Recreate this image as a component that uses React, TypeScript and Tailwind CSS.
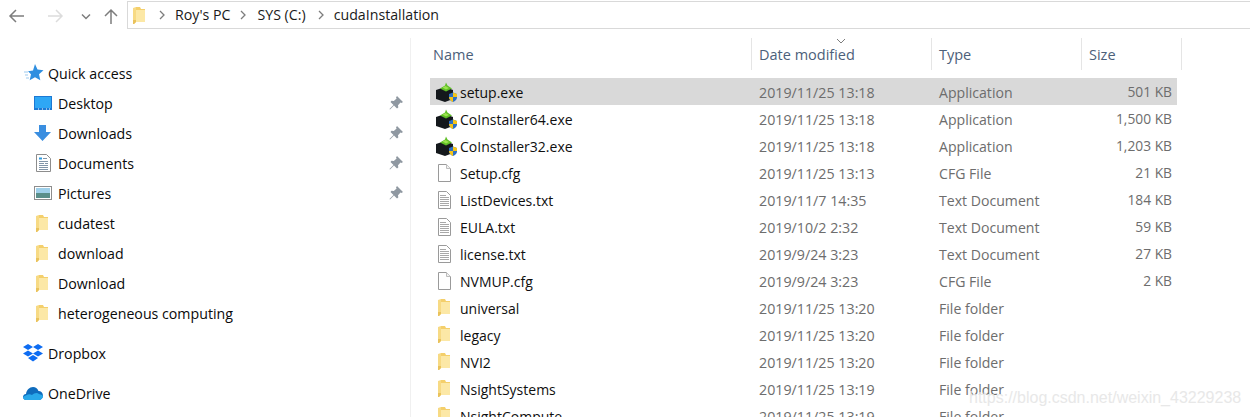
import React from "react";

const FONT = "font-['Open_Sans','Noto_Sans',sans-serif]";

function Folder({ className = "" }: { className?: string }) {
  return (
    <svg width="12" height="17" viewBox="0 0 12 17" className={className}>
      <path d="M3 0h4l1 2h4v13H3z" fill="#f4cf6b" />
      <path d="M3 3h9v12H3z" fill="#fce8a6" />
      <path d="M0 1l3-1v15l-2 2H0z" fill="#f7da84" />
      <path d="M0 13h3v2l-2 2H0z" fill="#e9c25c" />
    </svg>
  );
}

function Pin() {
  return (
    <svg width="14" height="14" viewBox="0 0 14 14">
      <path d="M8 0l6 6-1.500 1-1-.6L9 9.200l.3 2.300-1.300 1-3-3L1 13.500l-.5-.5 4-4-3-3 1-1.300 2.300.3L7.600 2.500 7 1.500z" fill="#8f98a1" />
    </svg>
  );
}

function ExeIcon() {
  return (
    <svg width="21" height="20" viewBox="0 0 21 20">
      <path d="M0 8l9-3 8 3v9l-8 3-9-3z" fill="#14181c" />
      <path d="M4 6.500l5-3 1-3 1.500 3 4.500 3-6 3z" fill="#5fbf26" />
      <path d="M6.500 5.500l3-1.500 3.500 2-3 1.500z" fill="#9be34f" />
      <path d="M13 12l4-1.500 4 1.500v3.500c0 2-2 3.500-4 4.500-2-1-4-2.500-4-4.500z" fill="#2d6fc4" />
      <path d="M17 10.500l4 1.500v3h-4zM13 15h4v5c-2-1-4-2.500-4-5z" fill="#f5c518" />
    </svg>
  );
}

function BlankFile() {
  return (
    <svg width="13" height="18" viewBox="0 0 13 18">
      <path d="M.5.500h8l4 4v13H.500z" fill="#fff" stroke="#9a9a9a" />
      <path d="M8.500.500v4h4" fill="#f2f2f2" stroke="#bdbdbd" />
    </svg>
  );
}

function TextFile() {
  return (
    <svg width="13" height="18" viewBox="0 0 13 18">
      <path d="M.5.500h8l4 4v13H.500z" fill="#fff" stroke="#9a9a9a" />
      <path d="M2 4.500h6M2 6.500h9M2 8.500h9M2 10.500h9M2 12.500h9M2 14.500h9" stroke="#a8a8a8" />
    </svg>
  );
}

function Chevron({ className }: { className: string }) {
  return (
    <svg width="8" height="10" viewBox="0 0 8 10" className={className}>
      <path d="M2 1l4 4-4 4" fill="none" stroke="#7d7d7d" strokeWidth="1.300" />
    </svg>
  );
}

function NavItem({ icon, label, pinned }: { icon: React.ReactNode; label: string; pinned?: boolean }) {
  return (
    <div className="flex h-[30px] items-center pl-[34px] pr-[7px]">
      <span className="flex w-[24px] shrink-0 items-center justify-start">{icon}</span>
      <span className="flex-1 pt-[2px] text-[14.2px] text-[#0a0a0a]">{label}</span>
      {pinned && <Pin />}
    </div>
  );
}

const files = [
  ["setup.exe", "2019/11/25 13:18", "Application", "501 KB", "exe"],
  ["CoInstaller64.exe", "2019/11/25 13:18", "Application", "1,500 KB", "exe"],
  ["CoInstaller32.exe", "2019/11/25 13:18", "Application", "1,203 KB", "exe"],
  ["Setup.cfg", "2019/11/25 13:13", "CFG File", "21 KB", "blank"],
  ["ListDevices.txt", "2019/11/7 14:35", "Text Document", "184 KB", "text"],
  ["EULA.txt", "2019/10/2 2:32", "Text Document", "59 KB", "text"],
  ["license.txt", "2019/9/24 3:23", "Text Document", "27 KB", "text"],
  ["NVMUP.cfg", "2019/9/24 3:23", "CFG File", "2 KB", "blank"],
  ["universal", "2019/11/25 13:20", "File folder", "", "folder"],
  ["legacy", "2019/11/25 13:20", "File folder", "", "folder"],
  ["NVI2", "2019/11/25 13:20", "File folder", "", "folder"],
  ["NsightSystems", "2019/11/25 13:19", "File folder", "", "folder"],
  ["NsightCompute", "2019/11/25 13:19", "File folder", "", "folder"],
];

function FileIcon({ kind }: { kind: string }) {
  if (kind === "exe") return <ExeIcon />;
  if (kind === "blank") return <BlankFile />;
  if (kind === "text") return <TextFile />;
  return <Folder />;
}

export default function App() {
  return (
    <div className={`relative h-[417px] w-[1250px] overflow-hidden bg-white ${FONT}`}>
      {/* top bar */}
      <div className="flex h-[29px] items-start pt-px">
        <div className="flex h-[28px] w-[127px] shrink-0 items-center">
          <svg width="127" height="28" viewBox="0 0 127 28">
            <path d="M24 15H10M16 9l-6 6 6 6" fill="none" stroke="#7d7d7d" strokeWidth="1.500" />
            <path d="M48 15h14M56 9l6 6-6 6" fill="none" stroke="#dcdcdc" strokeWidth="1.500" />
            <path d="M82 13.500l4 4 4-4" fill="none" stroke="#7d7d7d" strokeWidth="1.500" />
            <path d="M111 23V9M105 15l6-6 6 6" fill="none" stroke="#7d7d7d" strokeWidth="1.500" />
          </svg>
        </div>
        <div className="flex h-[28px] flex-1 items-center border border-r-0 border-[#d9d9d9] pl-[5px] text-[14.2px] text-[#1a1a1a]">
          <Folder />
          <Chevron className="ml-[13px]" />
          <span className="ml-[9px]">Roy's PC</span>
          <Chevron className="ml-[9px]" />
          <span className="ml-[10px]">SYS (C:)</span>
          <Chevron className="ml-[11px]" />
          <span className="ml-[9px]">cudaInstallation</span>
        </div>
      </div>

      <div className="flex">
        {/* sidebar */}
        <div className="mt-[9px] h-[400px] w-[411px] shrink-0 border-r border-[#f0f0f0] pt-[20px]">
          <div className="flex h-[30px] items-center pl-[24px]">
            <svg width="20" height="18" viewBox="0 0 20 18" className="mr-[4px]">
              <path d="M11 0l2.500 5.500 6 .7-4.500 4 1.300 6-5.300-3-5.300 3 1.300-6-3-3 5-.7z" fill="#2f8fe0" />
              <path d="M0 8h4M1 11h3M2 14h3" stroke="#9cc9ee" />
            </svg>
            <span className="pt-[2px] text-[14.2px] text-[#0a0a0a]">Quick access</span>
          </div>
          <NavItem
            pinned
            label="Desktop"
            icon={
              <svg width="18" height="14" viewBox="0 0 18 14">
                <rect width="18" height="14" fill="#1c79d4" />
                <rect x="1" y="1" width="16" height="11" fill="#2ea7f5" />
                <path d="M4 13h1M8 13h1M12 13h1M15 13h1" stroke="#fff" />
              </svg>
            }
          />
          <NavItem
            pinned
            label="Downloads"
            icon={
              <svg width="18" height="16" viewBox="0 0 18 16">
                <path d="M5 0h7v7h5l-8.500 9L0 7h5z" fill="#3a8ee0" />
              </svg>
            }
          />
          <NavItem
            pinned
            label="Documents"
            icon={
              <svg width="15" height="18" viewBox="0 0 15 18" className="ml-[2px]">
                <path d="M.5.500h10l4 4v13H.500z" fill="#fff" stroke="#8d8d8d" />
                <path d="M3 4.500h3" stroke="#2e9be0" strokeWidth="2" />
                <path d="M7 4.500h4M3 7.500h9M3 9.500h5M9 9.500h3M3 11.500h9M3 13.500h9M3 15.500h9" stroke="#8295a8" />
              </svg>
            }
          />
          <NavItem
            pinned
            label="Pictures"
            icon={
              <svg width="18" height="14" viewBox="0 0 18 14">
                <rect x=".5" y=".5" width="17" height="13" fill="#fff" stroke="#8d8d8d" />
                <rect x="2" y="2" width="14" height="5" fill="#9fd0ea" />
                <rect x="2" y="7" width="14" height="5" fill="#5a8f8a" />
              </svg>
            }
          />
          {["cudatest", "download", "Download", "heterogeneous computing"].map((f) => (
            <NavItem key={f} label={f} icon={<Folder className="ml-[2px]" />} />
          ))}
          <div className="mt-[10px] flex h-[30px] items-center pl-[23px]">
            <svg width="20" height="18" viewBox="0 0 20 18" className="mr-[5px]">
              <path d="M5 0l5 3-5 3-5-3zM15 0l5 3-5 3-5-3zM5 6.500l5 3-5 3-5-3zM15 6.500l5 3-5 3-5-3zM10 11l5 3-5 3.500L5 14z" fill="#0d6cf2" />
            </svg>
            <span className="pt-[2px] text-[14.2px] text-[#0a0a0a]">Dropbox</span>
          </div>
          <div className="mt-[10px] flex h-[30px] items-center pl-[23px]">
            <svg width="20" height="13" viewBox="0 0 20 13" className="mr-[5px]">
              <path d="M3 13C1 13 0 11.500 0 10s1-3 3-3c.5-4 3.500-7 7-7 2.500 0 4.500 1.500 5.500 4 2.500 0 4.500 2 4.500 4.500S18 13 16 13z" fill="#0f6cbd" />
              <path d="M3 13c-2 0-3-1.500-3-3 3-2 6-4 9-2 2-2 5-3 7-1 2 .5 4 1 4 2.500S18 13 16 13z" fill="#29a8ea" />
            </svg>
            <span className="pt-[2px] text-[14.2px] text-[#0a0a0a]">OneDrive</span>
          </div>
        </div>

        {/* file list */}
        <div className="flex-1 pl-[19px]">
          <div className="relative mt-[9px] flex h-[32px] w-[752px] items-center text-[14.5px] text-[#4c607a]">
            <div className="w-[322px] border-r border-[#e5e5e5] pl-[3px] pt-px leading-[31px]">Name</div>
            <div className="w-[180px] border-r border-[#e5e5e5] pl-[7px] pt-px leading-[31px]">Date modified</div>
            <div className="w-[150px] border-r border-[#e5e5e5] pl-[7px] pt-px leading-[31px]">Type</div>
            <div className="w-[100px] border-r border-[#e5e5e5] pl-[7px] pt-px leading-[31px]">Size</div>
            <svg width="10" height="6" viewBox="0 0 10 6" className="absolute left-[406px] top-0">
              <path d="M1 1l4 4 4-4" fill="none" stroke="#7d7d7d" />
            </svg>
          </div>
          <div className="mt-[8px] w-[747px]">
            {files.map(([name, date, type, size, kind], i) => (
              <div key={name} className={`flex h-[27px] items-center ${i === 0 ? "bg-[#d9d9d9]" : ""}`}>
                <div className="flex w-[322px] items-center pl-[5px]">
                  <span className={`flex w-[25px] shrink-0 items-center ${kind === "exe" ? "pl-[1px]" : "pl-[3px]"}`}>
                    <FileIcon kind={kind} />
                  </span>
                  <span className="pt-[2px] text-[14px] text-[#0f0f0f]">{name}</span>
                </div>
                <div className="w-[180px] pl-[7px] pt-[2px] text-[14.25px] text-[#6d6d6d]">{date}</div>
                <div className="w-[150px] pl-[7px] pt-[2px] text-[14.1px] text-[#6d6d6d]">{type}</div>
                <div className="w-[95px] pr-[5px] pt-[2px] text-right text-[13.8px] text-[#6d6d6d]">{size}</div>
              </div>
            ))}
          </div>
        </div>
      </div>

      {/* watermark */}
      <div className="absolute left-[969px] top-[388px] font-['Liberation_Sans',sans-serif] text-[16px] leading-[20px] text-[#e8e8e8]">
        https://blog.csdn.net/weixin_43229238
      </div>
    </div>
  );
}
